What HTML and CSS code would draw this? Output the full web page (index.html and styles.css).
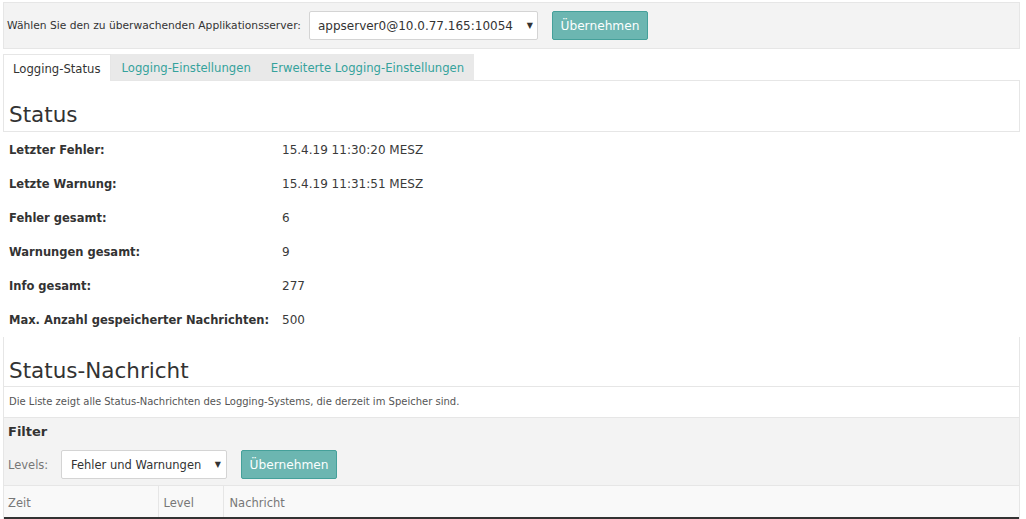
FILE: index.html
```html
<!DOCTYPE html>
<html lang="de">
<head>
<meta charset="utf-8">
<title>Logging-Status</title>
<link rel="stylesheet" href="styles.css">
</head>
<body>
<div class="page">
  <div class="serverbar">
    <span class="server-label">Wählen Sie den zu überwachenden Applikationsserver:</span>
    <div class="select select-server"><span class="select-text">appserver0@10.0.77.165:10054</span><span class="arrow">▼</span></div>
    <button class="btn" type="button">Übernehmen</button>
  </div>

  <div class="tabs">
    <div class="tab active">Logging-Status</div>
    <div class="tab">Logging-Einstellungen</div>
    <div class="tab">Erweiterte Logging-Einstellungen</div>
    <div class="tab-fill"></div>
  </div>

  <div class="panel-head">
    <h2 class="title">Status</h2>
  </div>

  <div class="stats">
    <div class="stat-label">Letzter Fehler:</div><div class="stat-value">15.4.19 11:30:20 MESZ</div>
    <div class="stat-label">Letzte Warnung:</div><div class="stat-value">15.4.19 11:31:51 MESZ</div>
    <div class="stat-label">Fehler gesamt:</div><div class="stat-value">6</div>
    <div class="stat-label">Warnungen gesamt:</div><div class="stat-value">9</div>
    <div class="stat-label">Info gesamt:</div><div class="stat-value">277</div>
    <div class="stat-label">Max. Anzahl gespeicherter Nachrichten:</div><div class="stat-value">500</div>
  </div>

  <section class="messages">
    <div class="msg-head">
      <h2 class="title">Status-Nachricht</h2>
    </div>
    <p class="msg-desc">Die Liste zeigt alle Status-Nachrichten des Logging-Systems, die derzeit im Speicher sind.</p>
    <div class="filter">
      <h3 class="filter-title">Filter</h3>
      <div class="filter-row">
        <span class="filter-label">Levels:</span>
        <div class="select select-level"><span class="select-text">Fehler und Warnungen</span><span class="arrow">▼</span></div>
        <button class="btn" type="button">Übernehmen</button>
      </div>
    </div>
    <table class="log">
      <colgroup><col class="c-zeit"><col class="c-level"><col></colgroup>
      <thead>
        <tr><th class="th-zeit">Zeit</th><th class="th-level">Level</th><th class="th-msg">Nachricht</th></tr>
      </thead>
    </table>
  </section>
</div>
</body>
</html>
```

FILE: styles.css
```css
* { box-sizing: border-box; }

html, body {
  margin: 0;
  padding: 0;
  background: #fff;
}

body {
  font-family: "DejaVu Sans", Verdana, sans-serif;
  color: #333;
  font-size: 11.5px;
  overflow: hidden;
}

.page {
  padding: 2px 6px 0 3px;
}

/* server bar */
.serverbar {
  height: 47px;
  background: #f3f3f3;
  border: 1px solid #e6e6e6;
  display: flex;
  align-items: center;
  padding-left: 3px;
}

.server-label {
  font-size: 10.7px;
  color: #333;
  margin-right: 8px;
}

.select {
  display: flex;
  align-items: center;
  justify-content: space-between;
  height: 29px;
  background: #fff;
  border: 1px solid #d4d4d4;
  border-radius: 2px;
  color: #333;
}

.select-server {
  width: 229px;
  padding: 0 4px 0 8px;
  font-size: 12px;
}

.select-level {
  width: 166px;
  padding: 0 5px 0 9px;
  font-size: 11.5px;
}

.arrow {
  font-size: 8px;
  color: #333;
  padding-bottom: 1px;
}

.btn {
  height: 29px;
  width: 96px;
  margin-left: 14px;
  padding: 0;
  background: #6cb6b1;
  border: 1px solid #45a09a;
  border-radius: 2px;
  color: #fbfefe;
  font-family: "DejaVu Sans", Verdana, sans-serif;
  font-size: 12.2px;
}

/* tabs */
.tabs {
  display: flex;
  margin-top: 5px;
  height: 27px;
}

.tab {
  padding: 2px 10px 0 10px;
  line-height: 24px;
  font-size: 11.65px;
  color: #35a29c;
  background: #e9e9e9;
  border-bottom: 1px solid #e6e6e6;
}

.tab.active {
  color: #333;
  background: #fff;
  border: 1px solid #e6e6e6;
  border-bottom: none;
  padding-left: 9px;
}

.tab-fill {
  flex: 1;
  border-bottom: 1px solid #e6e6e6;
}

/* panel heading */
.panel-head {
  border: 1px solid #e6e6e6;
  border-top: none;
  padding: 21px 5px 3px 5px;
}

.title {
  margin: 0;
  font-weight: normal;
  font-size: 21.5px;
  line-height: 26px;
  color: #333;
}

/* stats */
.stats {
  display: grid;
  grid-template-columns: 273px 1fr;
  grid-auto-rows: 34px;
  align-items: center;
  padding-left: 6px;
  margin-top: 1px;
}

.stat-label {
  font-weight: bold;
  font-size: 11.5px;
}

.stat-value {
  font-size: 12px;
  color: #3a3a3a;
}

/* messages section */
.messages {
  border-left: 1px solid #e6e6e6;
  border-right: 1px solid #e6e6e6;
}

.msg-head {
  padding: 21px 5px 2px 5px;
  border-bottom: 1px solid #e6e6e6;
}

.msg-desc {
  margin: 0;
  padding-left: 5px;
  height: 31px;
  line-height: 30px;
  font-size: 10px;
  color: #555;
  border-bottom: 1px solid #e6e6e6;
}

.filter {
  background: #f3f3f3;
  border-bottom: 1px solid #e6e6e6;
  padding: 5px 0 6px 4px;
}

.filter-title {
  margin: 0 0 9px 0;
  font-size: 13px;
  line-height: 18px;
  font-weight: bold;
  color: #333;
}

.filter-row {
  display: flex;
  align-items: center;
}

.filter-label {
  width: 53px;
  color: #777;
  font-size: 11.5px;
}

/* table */
.log {
  width: 100%;
  border-collapse: collapse;
  table-layout: fixed;
}

.c-zeit { width: 154px; }
.c-level { width: 65px; }

.log th {
  height: 32px;
  padding: 2px 0 0 4px;
  text-align: left;
  font-weight: normal;
  font-size: 11.5px;
  color: #777;
  background: #f9f9f9;
  border-right: 1px solid #e6e6e6;
  border-bottom: 2px solid #333;
}

.log .th-level { padding-left: 5px; }
.log .th-msg { padding-left: 6px; border-right: none; }
```
